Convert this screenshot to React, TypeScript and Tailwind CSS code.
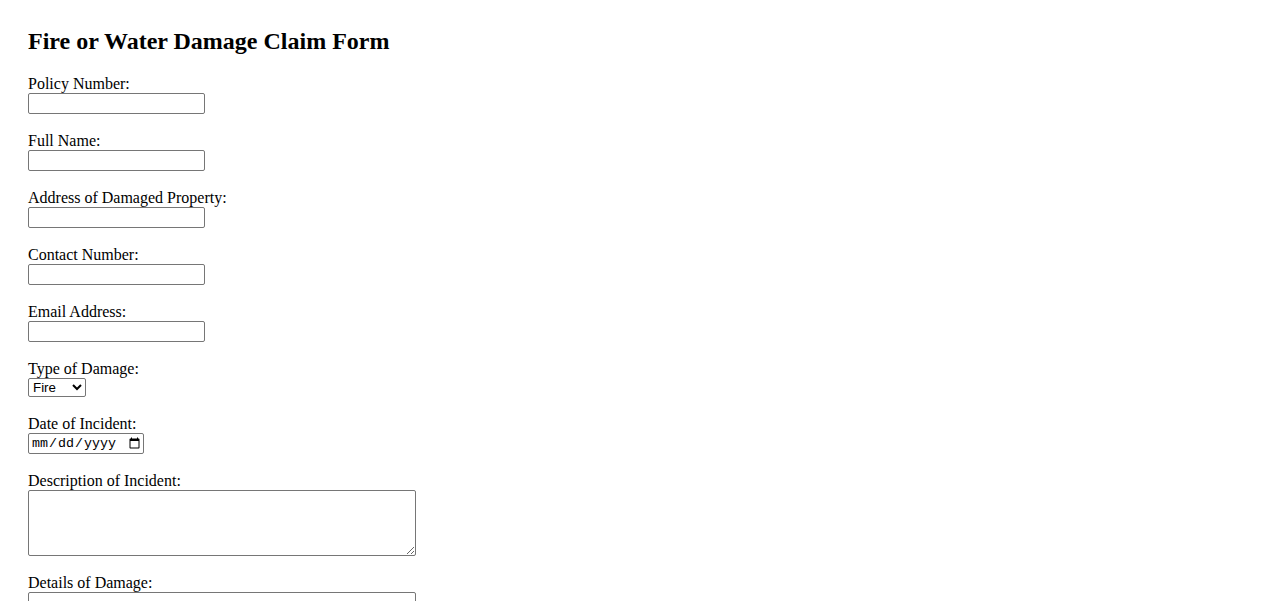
import React from "react";

const inputCls =
  "block w-[177px] h-[21px] box-border border border-[#767676] rounded-[2px] bg-white px-[2px] py-[1px] text-[13.33px] [font-family:Arial,'Liberation_Sans',sans-serif]";

function Group({ label, children }: { label: string; children: React.ReactNode }) {
  return (
    <div className="flex flex-col items-start mb-[18px]">
      <label className="block text-[16px] leading-[18px]">{label}</label>
      {children}
    </div>
  );
}

export default function App() {
  return (
    <div className="min-h-screen bg-white text-black pl-[28px] pt-[28px] [font-family:'Liberation_Serif','Times_New_Roman',serif]">
      <h2 className="text-[24px] font-bold leading-[27.6px] mb-[19.4px]">Fire or Water Damage Claim Form</h2>
      <form>
        <Group label="Policy Number:">
          <input type="text" className={inputCls} />
        </Group>
        <Group label="Full Name:">
          <input type="text" className={inputCls} />
        </Group>
        <Group label="Address of Damaged Property:">
          <input type="text" className={inputCls} />
        </Group>
        <Group label="Contact Number:">
          <input type="tel" className={inputCls} />
        </Group>
        <Group label="Email Address:">
          <input type="email" className={inputCls} />
        </Group>
        <Group label="Type of Damage:">
          <select className="block w-[58px] h-[19px] box-border border border-[#767676] rounded-[2px] bg-white text-[13.33px] [font-family:Arial,'Liberation_Sans',sans-serif]">
            <option>Fire</option>
            <option>Water</option>
          </select>
        </Group>
        <Group label="Date of Incident:">
          <input
            type="date"
            className="block w-[116px] h-[21px] box-border border border-[#767676] rounded-[2px] bg-white pl-[2px] text-[13.33px] [font-family:'Liberation_Mono','Courier_New',monospace]"
          />
        </Group>
        <Group label="Description of Incident:">
          <textarea className="block w-[388px] h-[66px] box-border border border-[#767676] rounded-[2px] bg-white p-[2px] text-[13.33px] [font-family:'Liberation_Mono',monospace]" />
        </Group>
        <Group label="Details of Damage:">
          <textarea className="block w-[388px] h-[66px] box-border border border-[#767676] rounded-[2px] bg-white p-[2px] text-[13.33px] [font-family:'Liberation_Mono',monospace]" />
        </Group>
      </form>
    </div>
  );
}
